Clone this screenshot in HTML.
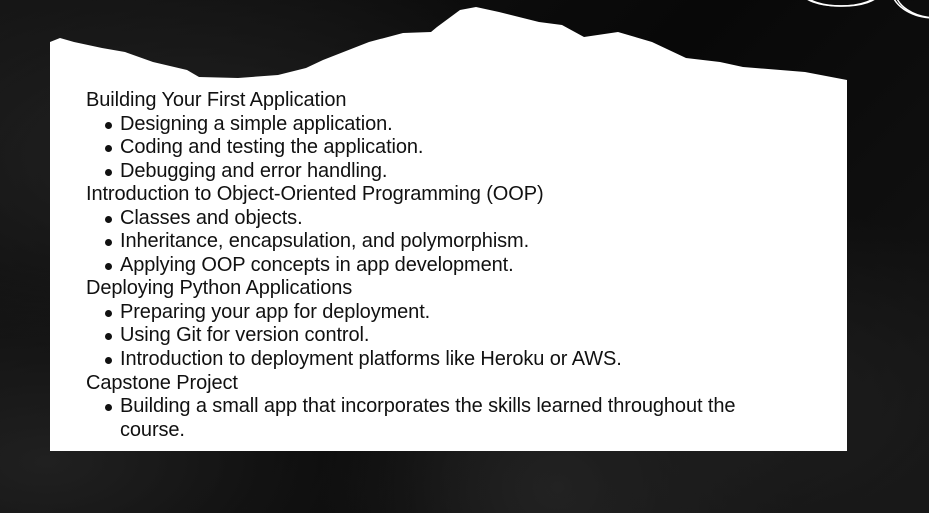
<!DOCTYPE html>
<html><head><meta charset="utf-8"><style>
html,body{margin:0;padding:0;width:929px;height:513px;overflow:hidden;background:#0c0c0c;}
.bg{position:absolute;inset:0;background:
radial-gradient(ellipse at 20% 30%,#222 0,transparent 40%),
radial-gradient(ellipse at 80% 80%,#1e1e1e 0,transparent 35%),
radial-gradient(ellipse at 60% 95%,#242424 0,transparent 30%),
radial-gradient(ellipse at 5% 90%,#202020 0,transparent 30%),
linear-gradient(135deg,#141414,#080808 50%,#151515);}
svg{position:absolute;left:0;top:0}
.t{position:absolute;left:86px;top:89px;font-family:"Liberation Sans",sans-serif;font-size:20px;color:#111;line-height:23.55px;letter-spacing:-0.1px}
.t div{white-space:nowrap}
.b{padding-left:34px;position:relative}
.b:before{content:"";position:absolute;left:19px;top:9px;width:7px;height:7px;border-radius:50%;background:#111}
</style></head><body>
<div class="bg"></div>
<svg width="929" height="513">
<polygon fill="#fff" points="50,42 60,38 74,42 102,48 125,52 153,62 187,70 199,77 238,78 278,75 306,68 323,60 369,42 403,33 431,32 437,27 460,10 476,7 499,12 539,22 562,25 584,37 618,32 652,42 686,58 720,62 743,67 805,72 847,80 847,451 50,451"/>
<g fill="none" stroke="#fff" stroke-width="1.5">
<ellipse cx="840" cy="-8" rx="38" ry="14"/><ellipse cx="842" cy="-6" rx="36" ry="12"/>
<ellipse cx="935" cy="-12" rx="44" ry="30"/><ellipse cx="937" cy="-10" rx="42" ry="28"/>
</g>
</svg>
<div class="t">
<div>Building Your First Application</div>
<div class="b">Designing a simple application.</div>
<div class="b">Coding and testing the application.</div>
<div class="b">Debugging and error handling.</div>
<div>Introduction to Object-Oriented Programming (OOP)</div>
<div class="b">Classes and objects.</div>
<div class="b">Inheritance, encapsulation, and polymorphism.</div>
<div class="b">Applying OOP concepts in app development.</div>
<div>Deploying Python Applications</div>
<div class="b">Preparing your app for deployment.</div>
<div class="b">Using Git for version control.</div>
<div class="b">Introduction to deployment platforms like Heroku or AWS.</div>
<div>Capstone Project</div>
<div class="b">Building a small app that incorporates the skills learned throughout the</div>
<div style="padding-left:34px">course.</div>
</div>
</body></html>
